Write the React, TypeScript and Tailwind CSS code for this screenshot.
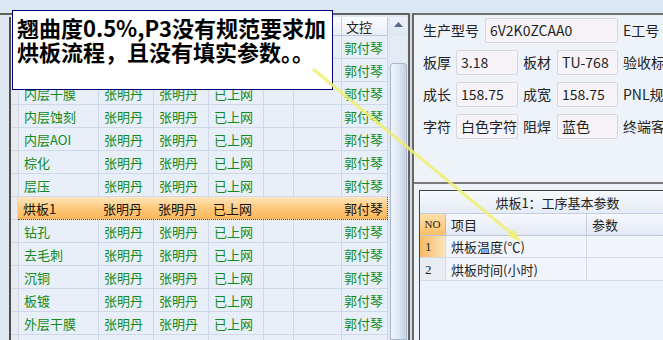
import React from "react";

const rows = [
  "",
  "",
  "内层干膜",
  "内层蚀刻",
  "内层AOI",
  "棕化",
  "层压",
  "烘板1",
  "钻孔",
  "去毛刺",
  "沉铜",
  "板镀",
  "外层干膜",
  "",
];

const colW = ["w-[80px]", "w-[55px]", "w-[55px]", "w-[55px]", "w-[30px]", "w-[48px]", "w-[46px]"];
const headers = ["", "", "", "", "", "", "文控"];

function Grid() {
  return (
    <div className="w-[377px] shrink-0 flex flex-col text-[13px] leading-none">
      <div className="flex h-[19px] shrink-0 border-b border-[#b7c4d8] bg-gradient-to-b from-[#fbfcfe] to-[#e9eef6]">
        <div className="w-[8px] border-r border-[#c5cfdf]" />
        {headers.map((h, i) => (
          <div key={i} className={`${colW[i]} border-r border-[#c5cfdf] flex items-center pl-[4px] text-[#222]`}>
            {h}
          </div>
        ))}
      </div>
      {rows.map((name, r) => {
        const sel = r === 7;
        const hidden = r < 2;
        const last = r === rows.length - 1;
        const cells = last
          ? ["", "", "", "", "", "", ""]
          : hidden
            ? ["", "", "", "", "", "", "郭付琴"]
            : [name, "张明丹", "张明丹", "已上网", "", "", "郭付琴"];
        return (
          <div key={r} className="flex h-[23px] shrink-0">
            <div className="w-[8px] bg-[#e7ebf1] border-r border-b border-[#d2d9e4]" />
            {sel ? (
              <div className="flex flex-1 bg-gradient-to-b from-[#fee6bd] via-[#fdc97c] to-[#f9b65c] border-b border-r border-dotted border-[#5a4a30] text-[#111]">
                {cells.map((c, i) => (
                  <div
                    key={i}
                    className={`${colW[i]} flex items-center ${i === 6 ? "justify-end pr-[4px]" : "pl-[5px]"}`}
                  >
                    {c}
                  </div>
                ))}
              </div>
            ) : (
              <div className="flex flex-1 bg-[#e8eff9] text-[#108a22]">
                {cells.map((c, i) => (
                  <div
                    key={i}
                    className={`${colW[i]} flex items-center border-r border-b border-[#cfd8e8] ${i === 6 ? "justify-end pr-[4px]" : "pl-[5px]"}`}
                  >
                    {c}
                  </div>
                ))}
              </div>
            )}
          </div>
        );
      })}
    </div>
  );
}

function Scrollbar() {
  return (
    <div className="ml-[2px] w-[17px] shrink-0 flex flex-col bg-[#e4ebf5]">
      <div className="h-[19px] shrink-0 flex items-start justify-center pt-[5px] rounded-[2px] bg-gradient-to-b from-[#eef3fa] to-[#dde6f2]">
        <svg width="9" height="5" viewBox="0 0 9 5">
          <polygon points="4.5,0 9,5 0,5" fill="#56698a" />
        </svg>
      </div>
      <div className="h-[27px] shrink-0" />
      <div className="flex-1 rounded-t-[3px] border border-[#a9b8ce] bg-gradient-to-r from-[#f0f4fa] via-[#dfe7f3] to-[#c5d2e5]" />
    </div>
  );
}

function Field({ w, value }: { w: string; value: string }) {
  return (
    <div className={`${w} h-[25px] shrink-0 rounded-[2px] border border-[#d8d6de] bg-[#f6f4f8] flex items-center pl-[4px] text-[#1e1e1e]`}>
      {value}
    </div>
  );
}

export default function App() {
  return (
    <div className="relative w-[663px] h-[340px] overflow-hidden bg-[#dce7f6] font-['Noto_Sans_CJK_SC',sans-serif]">
      <div className="h-[13px]" />
      <div className="flex h-[327px]">
        <div className="w-[410px] shrink-0 flex border-t-2 border-r-2 border-[#606060] bg-[#dfe7f3] pt-[2px] pl-[9px]">
          <div className="flex border-l-2 border-[#4e4e4e]">
            <Grid />
            <Scrollbar />
          </div>
        </div>
        <div className="w-[2px] shrink-0 bg-[#d6dbe2]" />
        <div className="flex-1 min-w-0 flex flex-col border-l-2 border-[#666]">
          <div className="h-[169px] shrink-0 border-t-2 border-[#707070] bg-[#eef3fa] pt-[3px] pl-[9px] text-[14px] text-[#222] whitespace-nowrap flex flex-col gap-[7px]">
            <div className="flex items-center">
              <span className="w-[62px] shrink-0">生产型号</span>
              <Field w="w-[133px]" value="6V2K0ZCAA0" />
              <span className="ml-[5px]">E工号</span>
            </div>
            <div className="flex items-center">
              <span className="w-[33px] shrink-0">板厚</span>
              <Field w="w-[62px]" value="3.18" />
              <span className="ml-[5px] w-[34px] shrink-0">板材</span>
              <Field w="w-[61px]" value="TU-768" />
              <span className="ml-[5px]">验收标</span>
            </div>
            <div className="flex items-center">
              <span className="w-[33px] shrink-0">成长</span>
              <Field w="w-[62px]" value="158.75" />
              <span className="ml-[5px] w-[34px] shrink-0">成宽</span>
              <Field w="w-[61px]" value="158.75" />
              <span className="ml-[5px]">PNL规</span>
            </div>
            <div className="flex items-center">
              <span className="w-[33px] shrink-0">字符</span>
              <Field w="w-[62px]" value="白色字符" />
              <span className="ml-[5px] w-[34px] shrink-0">阻焊</span>
              <Field w="w-[61px]" value="蓝色" />
              <span className="ml-[5px]">终端客</span>
            </div>
          </div>
          <div className="flex-1 border-t-2 border-[#7a7a7a] bg-[#eef3fa] pt-[6px] pl-[5px]">
            <div className="w-[276px] h-full border-l border-t border-[#444] bg-[#edf2fa] text-[13px] leading-none text-[#222]">
              <div className="h-[23px] flex items-center justify-center border-b border-[#c3cde0] bg-gradient-to-b from-[#f6f8fc] to-[#e6ecf5]">
                烘板1：工序基本参数
              </div>
              <div className="h-[22px] flex border-b border-[#b9c6da]">
                <div className="w-[26px] flex items-center justify-center bg-gradient-to-b from-[#fde0ab] to-[#f9bf68] text-[11px] font-['Liberation_Serif',serif] border-r border-[#d9b787]">
                  NO
                </div>
                <div className="w-[141px] flex items-center pl-[5px] border-r border-[#c3cde0] bg-gradient-to-b from-[#f6f8fc] to-[#e3e9f3]">
                  项目
                </div>
                <div className="flex-1 flex items-center pl-[5px] bg-gradient-to-b from-[#f6f8fc] to-[#e3e9f3]">参数</div>
              </div>
              <div className="h-[22px] flex border-b border-[#d3dbe8] bg-[#f1f5fb]">
                <div className="w-[26px] flex items-center pl-[5px] bg-gradient-to-r from-[#f8b95e] to-[#fde4bc] border-r border-[#d3dbe8] font-['Liberation_Serif',serif]">
                  1
                </div>
                <div className="w-[141px] flex items-center pl-[5px] border-r border-[#d3dbe8]">烘板温度(℃)</div>
                <div className="flex-1" />
              </div>
              <div className="h-[23px] flex border-b border-[#d3dbe8] bg-[#f1f5fb]">
                <div className="w-[26px] flex items-center pl-[5px] bg-[#e9edf3] border-r border-[#d3dbe8] font-['Liberation_Serif',serif]">
                  2
                </div>
                <div className="w-[141px] flex items-center pl-[5px] border-r border-[#d3dbe8]">烘板时间(小时)</div>
                <div className="flex-1" />
              </div>
            </div>
          </div>
        </div>
      </div>

      {/* comment tooltip */}
      <div className="absolute left-[12px] top-[10px] w-[321px] h-[80px] border border-[#00007a] bg-white pt-[4px] pl-[4px] text-[22px] leading-[24px] font-bold text-black whitespace-nowrap">
        翘曲度0.5%,P3没有规范要求加
        <br />
        烘板流程，且没有填实参数。。
      </div>
      <svg className="absolute left-0 top-0 pointer-events-none" width="663" height="340">
        <line x1="313" y1="69" x2="517" y2="238" stroke="#eeee70" strokeWidth="3" strokeOpacity="0.85" />
        <polygon points="521,242 508,236 514,229" fill="#eeee70" fillOpacity="0.85" />
      </svg>
    </div>
  );
}
